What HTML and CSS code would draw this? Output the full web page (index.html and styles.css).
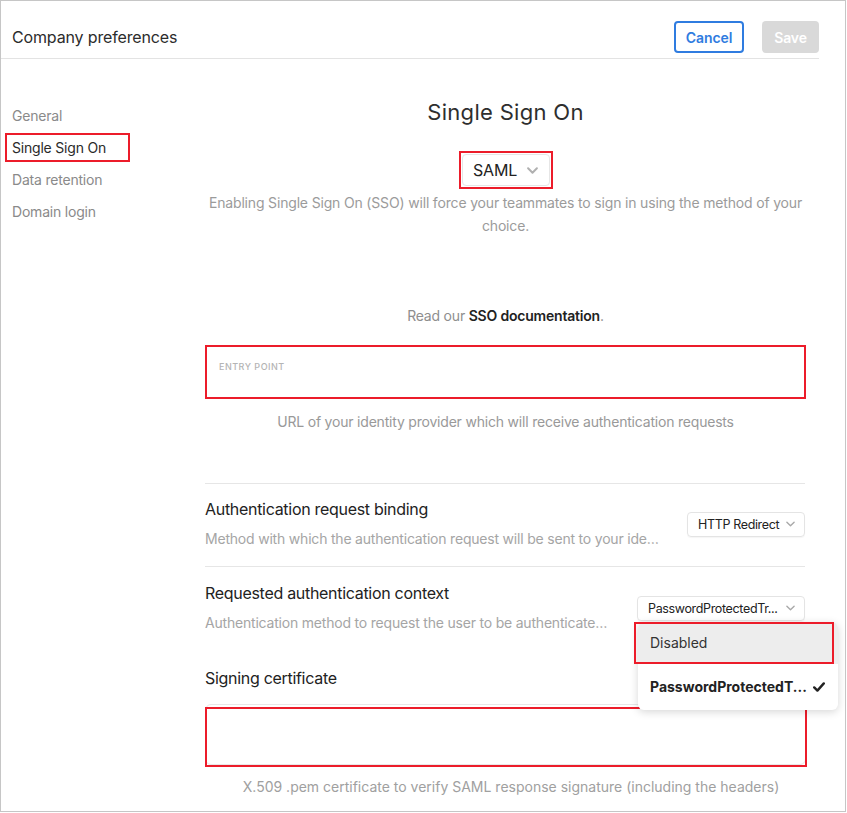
FILE: index.html
```html
<!DOCTYPE html>
<html>
<head>
<meta charset="utf-8">
<link rel="stylesheet" href="styles.css">
</head>
<body>
<div class="frame">
  <header class="topbar">
    <h1 class="page-title">Company preferences</h1>
    <div class="actions">
      <button class="btn btn-cancel">Cancel</button>
      <button class="btn btn-save">Save</button>
    </div>
  </header>
  <div class="body">
    <nav class="sidebar">
      <a class="nav-item">General</a>
      <a class="nav-item active">Single Sign On</a>
      <a class="nav-item">Data retention</a>
      <a class="nav-item">Domain login</a>
    </nav>
    <main class="main">
      <h2 class="section-title">Single Sign On</h2>
      <div class="method-wrap">
        <div class="method-select">SAML
          <svg class="chev chev-lg" viewBox="0 0 10 6"><path d="M1 1l4 4 4-4" fill="none" stroke="#b0b0b0" stroke-width="1.8" stroke-linecap="round" stroke-linejoin="round"/></svg>
        </div>
      </div>
      <p class="intro">Enabling Single Sign On (SSO) will force your teammates to sign in using the method of your choice.</p>
      <p class="doc-link">Read our <b>SSO documentation</b>.</p>
      <div class="entry-field">
        <span class="field-label">ENTRY POINT</span>
      </div>
      <p class="help">URL of your identity provider which will receive authentication requests</p>

      <div class="setting-row bordered">
        <div class="setting-text">
          <div class="setting-title">Authentication request binding</div>
          <div class="setting-desc">Method with which the authentication request will be sent to your identity provider</div>
        </div>
        <div class="small-select sel-binding">HTTP Redirect
          <svg class="chev" viewBox="0 0 10 6"><path d="M1 1l4 4 4-4" fill="none" stroke="#a8a8a8" stroke-width="1.5" stroke-linecap="round" stroke-linejoin="round"/></svg>
        </div>
      </div>

      <div class="setting-row">
        <div class="setting-text">
          <div class="setting-title">Requested authentication context</div>
          <div class="setting-desc">Authentication method to request the user to be authenticated with</div>
        </div>
        <div class="small-select sel-context"><span class="sel-text">PasswordProtectedTr...</span>
          <svg class="chev" viewBox="0 0 10 6"><path d="M1 1l4 4 4-4" fill="none" stroke="#a8a8a8" stroke-width="1.5" stroke-linecap="round" stroke-linejoin="round"/></svg>
          <div class="menu">
            <div class="menu-item hovered">Disabled</div>
            <div class="menu-item selected"><span>PasswordProtectedT...</span>
              <svg class="check" viewBox="0 0 12 10"><path d="M1.2 5.4l3.2 3.2L10.8 1.4" fill="none" stroke="#222" stroke-width="2.4" stroke-linecap="round" stroke-linejoin="round"/></svg>
            </div>
          </div>
        </div>
      </div>

      <div class="cert-title">Signing certificate</div>
      <div class="cert-box"></div>
      <p class="help help-cert">X.509 .pem certificate to verify SAML response signature (including the headers)</p>
    </main>
  </div>
</div>
</body>
</html>
```

FILE: styles.css
```css
* { box-sizing: border-box; }
html, body { margin: 0; padding: 0; background: #fff; }
body { font-family: Inter, Roboto, "Noto Sans", sans-serif; color: #333; }

.frame {
  width: 846px;
  height: 812px;
  border: 1px solid #c6c6c6;
  overflow: hidden;
  position: relative;
}

.topbar {
  height: 58px;
  margin-right: 26px;
  border-bottom: 1px solid #e3e3e3;
  display: flex;
  align-items: center;
  justify-content: space-between;
  padding: 15px 0 0 11px;
}
.page-title {
  margin: 0;
  font-size: 16px;
  font-weight: 400;
  color: #2c2c2c;
  letter-spacing: -0.15px;
}
.actions { display: flex; gap: 18px; }
.btn {
  font-family: inherit;
  font-size: 14px;
  font-weight: 600;
  height: 32px;
  border-radius: 4px;
  padding: 0;
  letter-spacing: -0.1px;
}
.btn-cancel {
  width: 70px;
  background: #fff;
  color: #2f7ce0;
  border: 2px solid #2f7ce0;
}
.btn-save {
  width: 57px;
  background: #d9d9d9;
  color: #fff;
  border: none;
}

.body { display: flex; }
.sidebar {
  width: 204px;
  padding-top: 41px;
  display: flex;
  flex-direction: column;
}
.nav-item {
  display: block;
  font-size: 14px;
  line-height: 32px;
  height: 32px;
  padding-left: 11px;
  color: #8a8a8a;
  letter-spacing: -0.2px;
}
.nav-item.active {
  color: #2a2a2a;
  width: 125px;
  height: 29px;
  line-height: 25px;
  margin: 1px 0 2px 4px;
  padding-left: 5px;
  border: 2px solid #ec1c2a;
}

.main {
  width: 601px;
  display: flex;
  flex-direction: column;
  align-items: center;
}
.section-title {
  margin: 38px 0 0;
  font-size: 22px;
  line-height: 30px;
  font-weight: 400;
  color: #2e2e2e;
  letter-spacing: 0.3px;
}
.method-wrap {
  margin-top: 24px;
  width: 94px;
  height: 38px;
  border: 2px solid #ec1c2a;
  padding: 1px;
}
.method-select {
  height: 32px;
  border: 1px solid #e6e6e6;
  border-radius: 4px;
  display: flex;
  align-items: center;
  justify-content: center;
  gap: 10px;
  font-size: 16px;
  color: #222;
  letter-spacing: -0.2px;
}
.chev { width: 9px; height: 6px; flex: none; }
.chev-lg { width: 11px; height: 7px; }

.intro {
  margin: 2px 0 0;
  width: 600px;
  text-align: center;
  font-size: 14px;
  line-height: 23px;
  color: #9b9b9b;
  letter-spacing: -0.17px;
}
.doc-link {
  margin: 69px 0 0;
  font-size: 14px;
  line-height: 20px;
  color: #8e8e8e;
  letter-spacing: -0.2px;
}
.doc-link b { color: #222; font-weight: 600; }

.entry-field {
  align-self: stretch;
  margin-top: 19px;
  height: 54px;
  border: 2px solid #ec1c2a;
  padding: 11px 0 0 12px;
  line-height: 12px;
}
.field-label {
  font-size: 9px;
  letter-spacing: 0.5px;
  color: #b4b4b4;
  font-weight: 500;
}
.help {
  margin: 13px 0 0;
  font-size: 14px;
  line-height: 20px;
  color: #999;
  text-align: center;
  letter-spacing: -0.2px;
}

.setting-row {
  align-self: stretch;
  width: 600px;
  display: flex;
  justify-content: space-between;
  align-items: center;
  padding: 14px 0 18px;
  height: 84px;
}
.setting-row.bordered {
  margin-top: 51px;
  border-top: 1px solid #e6e6e6;
  border-bottom: 1px solid #e6e6e6;
}
.setting-text { width: 460px; }
.setting-title {
  font-size: 16px;
  line-height: 22px;
  color: #222;
  letter-spacing: -0.3px;
}
.setting-desc {
  margin-top: 9px;
  font-size: 14px;
  line-height: 20px;
  color: #a5a5a5;
  white-space: nowrap;
  overflow: hidden;
  text-overflow: ellipsis;
  width: 456px;
  letter-spacing: -0.2px;
}
.setting-row:not(.bordered) .setting-desc { width: 406px; }

.small-select {
  position: relative;
  height: 25px;
  border: 1px solid #e4e4e4;
  border-radius: 4px;
  box-shadow: 0 1px 1px rgba(0,0,0,0.04);
  display: flex;
  align-items: center;
  justify-content: space-between;
  padding: 0 9px 0 10px;
  font-size: 12.5px;
  color: #222;
  margin-top: 2px;
  white-space: nowrap;
  flex: none;
  letter-spacing: -0.35px;
}
.sel-binding { width: 118px; }
.sel-context { width: 168px; }

.menu {
  position: absolute;
  top: 25px;
  left: 0;
  width: 200px;
  background: #fff;
  border-radius: 6px;
  box-shadow: 0 2px 8px rgba(0,0,0,0.16);
  z-index: 5;
  letter-spacing: 0;
}
.menu-item {
  height: 42px;
  display: flex;
  align-items: center;
  padding-left: 12px;
  font-size: 14px;
  color: #333;
}
.menu-item.hovered {
  background: #ededed;
  border-radius: 6px 6px 0 0;
  position: relative;
}
.menu-item.hovered::after {
  content: "";
  position: absolute;
  left: -4px;
  top: 0;
  width: 200px;
  height: 42px;
  border: 2px solid #ec1c2a;
  box-sizing: border-box;
}
.menu-item.selected {
  height: 46px;
  font-weight: 700;
  color: #222;
  gap: 6px;
}
.check { width: 12px; height: 10px; }

.cert-title {
  align-self: stretch;
  margin-top: 16px;
  font-size: 16px;
  line-height: 22px;
  color: #222;
  letter-spacing: -0.3px;
}
.cert-box {
  align-self: stretch;
  margin-top: 15px;
  height: 61px;
  border: 1px solid #e8e8e8;
  border-radius: 6px;
  position: relative;
}
.cert-box::after {
  content: "";
  position: absolute;
  left: -1px;
  top: 2px;
  width: 602px;
  height: 60px;
  border: 2px solid #ec1c2a;
  box-sizing: border-box;
}
.help-cert {
  margin-top: 12px;
  padding-left: 11px;
  font-size: 14px;
  color: #a0a0a0;
  letter-spacing: 0;
}
```
